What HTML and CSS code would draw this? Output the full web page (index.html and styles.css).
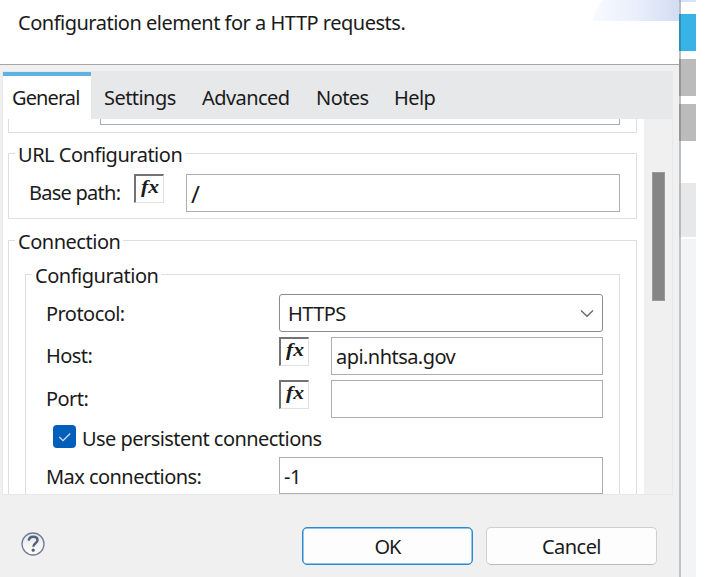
FILE: index.html
```html
<!DOCTYPE html>
<html lang="en">
<head>
<meta charset="utf-8">
<title>HTTP Request Configuration</title>
<link rel="stylesheet" href="styles.css">
</head>
<body>
<div class="screen">
  <main class="dialog">
    <header class="banner">
      <p class="t-desc">Configuration element for a HTTP requests.</p>
      <svg class="swoosh" width="86" height="21" viewBox="0 0 86 21"><defs><linearGradient id="sw"><stop offset="0" stop-color="#f8fafe"/><stop offset=".5" stop-color="#e9effb"/><stop offset="1" stop-color="#d2dcf3"/></linearGradient></defs><path d="M0 21Q2 8 10 0H86V21Z" fill="url(#sw)"/></svg>
    </header>
    <section class="tabs">
      <nav class="tabbar">
        <a class="tab active t-general">General</a>
        <a class="tab t-settings">Settings</a>
        <a class="tab t-advanced">Advanced</a>
        <a class="tab t-notes">Notes</a>
        <a class="tab t-help">Help</a>
      </nav>
      <div class="pane">
        <div class="content">
          <div class="group first"><div class="field cut"></div></div>
          <div class="group url">
            <span class="legend t-url">URL Configuration</span>
            <div class="row path">
              <label class="t-base">Base path:</label>
              <span class="fx"><em>fx</em></span>
              <div class="field grow"><span class="t-slash">/</span></div>
            </div>
          </div>
          <div class="group connection">
            <span class="legend t-conn">Connection</span>
            <div class="group inner">
              <span class="legend t-conf">Configuration</span>
              <div class="row">
                <label class="t-protocol">Protocol:</label>
                <div class="field select grow"><span class="t-https">HTTPS</span><svg width="14" height="9" viewBox="0 0 14 9"><path d="M1 1.5L7 7.3L13 1.5" fill="none" stroke="#666" stroke-width="1.3"/></svg></div>
              </div>
              <div class="row">
                <label class="t-host">Host:</label>
                <span class="fx"><em>fx</em></span>
                <div class="field grow"><span class="t-api">api.nhtsa.gov</span></div>
              </div>
              <div class="row">
                <label class="t-port">Port:</label>
                <span class="fx"><em>fx</em></span>
                <div class="field grow"></div>
              </div>
              <div class="check">
                <svg width="23" height="23" viewBox="0 0 23 23"><rect width="23" height="23" rx="4" fill="#005fb8"/><path d="M6.3 12L10 15.7L17.2 8.5" fill="none" stroke="#d5e5f4" stroke-width="1.2"/></svg>
                <span class="t-use">Use persistent connections</span>
              </div>
              <div class="row">
                <label class="t-max">Max connections:</label>
                <div class="field last grow"><span class="t-one">-1</span></div>
              </div>
            </div>
          </div>
        </div>
        <div class="scrollbar"><div class="thumb"></div></div>
      </div>
    </section>
    <footer class="footer">
      <svg class="help" width="24" height="24" viewBox="0 0 24 24"><defs><linearGradient id="hg" x2="0" y2="1"><stop offset="0" stop-color="#e6e6e8"/><stop offset="1" stop-color="#fff"/></linearGradient></defs><circle cx="12" cy="12" r="11" fill="url(#hg)" stroke="#6f7c97" stroke-width="1.3"/><path d="M7.8 8.6C8 5.8 9.7 4.8 12.2 4.8C14.8 4.8 16.5 6 16.5 8.2C16.5 11.2 12.3 11.3 12.3 14.8" fill="none" stroke="#53617f" stroke-width="2.5"/><circle cx="12.2" cy="18.2" r="1.6" fill="#53617f"/></svg>
      <button class="ok"><span class="t-ok">OK</span></button>
      <button class="cancel"><span class="t-cancel">Cancel</span></button>
    </footer>
  </main>
  <aside class="backdrop">
    <i class="block pale"></i><i class="block blue"></i><i class="block gray"></i><i class="block gray second"></i><i class="block light"></i><i class="block rest"></i>
  </aside>
</div>
</body>
</html>
```
FILE: styles.css
```css
* { box-sizing: border-box; }
body { margin: 0; background: #fff; color: #1a1a1a; font: 20px/26px "Noto Sans", "Open Sans", sans-serif; letter-spacing: -0.55px; overflow: hidden; white-space: nowrap; }
.screen { display: flex; width: 712px; height: 577px; }
.dialog { width: 679px; display: flex; flex-direction: column; background: #f0f0f0; }
.banner { height: 65px; background: #fff; border-bottom: 1px solid #a6a6a8; display: flex; justify-content: space-between; padding-left: 18px; }
.banner p { margin: 10px 0 0; }
.t-desc { letter-spacing: -0.49px; }
.tabs { margin: 6px 5px 0 2px; border: 1px solid #e7e8ea; width: 671px; height: 424px; }
.tabbar { display: flex; height: 47px; flex: none; background: #e7e8ea; }
.tab { padding-top: 13px; }
.tab.active { width: 88px; padding: 9px 0 0 9px; margin-right: 13px; background: #fff; border-top: 4px solid #5fb3e0; }
.t-general { letter-spacing: -0.9px; }
.t-settings { width: 98px; }
.t-advanced { width: 114px; }
.t-notes { width: 78px; }
.pane { display: flex; height: 375px; overflow: hidden; background: #f0f0f0; }
.content { width: 641px; background: #fff; padding: 0 7px 0 5px; flex: none; }
.scrollbar { width: 28px; padding: 53px 0 0 8px; }
.thumb { width: 13px; height: 129px; background: #858585; border: 1px solid #999; }
.group { border: 1px solid #dedede; }
.group.first { height: 14px; border-top: 0; padding: 0 16px 0 91px; }
.field { height: 38px; border: 1px solid #abadb3; background: #fff; display: flex; align-items: center; padding: 2px 4px 0; }
.field.cut { height: 6px; border-top: 0; padding: 0; }
.field.last { height: 37px; padding-top: 3px; }
.grow { flex: 1; }
.legend { display: block; width: max-content; margin: -12px 0 0 6px; padding: 0 3px; background: #fff; }
.t-url, .t-conf, .t-conn { letter-spacing: -0.48px; }
.url { margin-top: 20px; height: 66px; }
.row { display: flex; height: 43px; padding-right: 16px; }
.row label { padding-top: 7px; }
.row label.t-base, .row label.t-host, .row label.t-port { padding-top: 6px; }
.t-base { letter-spacing: -0.75px; }
.t-slash { font-size: 24px; }
.path { padding: 6px 16px 0 20px; }
.path label { width: 105px; }
.fx { width: 30px; height: 29px; border: 1px solid #e1e1e1; border-top: 2px solid #737373; border-left: 2px solid #737373; font: bold 18px/22px "Liberation Serif", serif; letter-spacing: 0; padding-left: 5px; margin-right: 22px; }
.fx em { display: inline-block; transform: scaleX(1.2); transform-origin: left; }
.connection { margin-top: 21px; height: 300px; padding-right: 16px; }
.inner { margin: 19px 0 0 16px; height: 250px; }
.inner .row { padding-left: 20px; }
.inner .row label { width: 233px; }
.inner .legend + .row { margin-top: 5px; }
.select { border-color: #8b8b8b; border-radius: 3px; justify-content: space-between; padding: 1px 8px 0 8px; }
.check { display: flex; height: 34px; padding: 2px 0 0 27px; gap: 6px; }
.check span { padding-top: 1px; }
.footer { flex: 1; display: flex; align-items: flex-start; padding: 32px 21px 0 21px; }
.help { margin: 5px 257px 0 0; }
button { width: 171px; height: 38px; flex: none; margin: 0; padding: 2px 0 0; background: #fdfdfd; border: 1px solid #d0d0d0; border-bottom-color: #bbb; border-radius: 5px; color: inherit; font: inherit; letter-spacing: inherit; }
.ok { border: 1px solid #2b8ad4; box-shadow: inset 0 0 0 .5px #2b8ad4; margin-right: 13px; }
.t-ok { letter-spacing: -1px; }
.backdrop { width: 17px; border-left: 2px solid #bcbfc1; display: flex; flex-direction: column; }
.block { flex: none; margin-left: -2px; border-left: 2px solid rgba(0,0,0,.2); }
.pale { height: 2px; background: #d3e3fa; margin-bottom: 12px; }
.blue { height: 37px; background: #39b3e6; margin-bottom: 8px; }
.gray { height: 37px; background: #bbb; margin-bottom: 8px; }
.second { margin-bottom: 42px; }
.light { height: 54px; background: #e7e8ea; margin-bottom: 2px; }
.rest { flex: 1; background: #f3f4f6; }
```
